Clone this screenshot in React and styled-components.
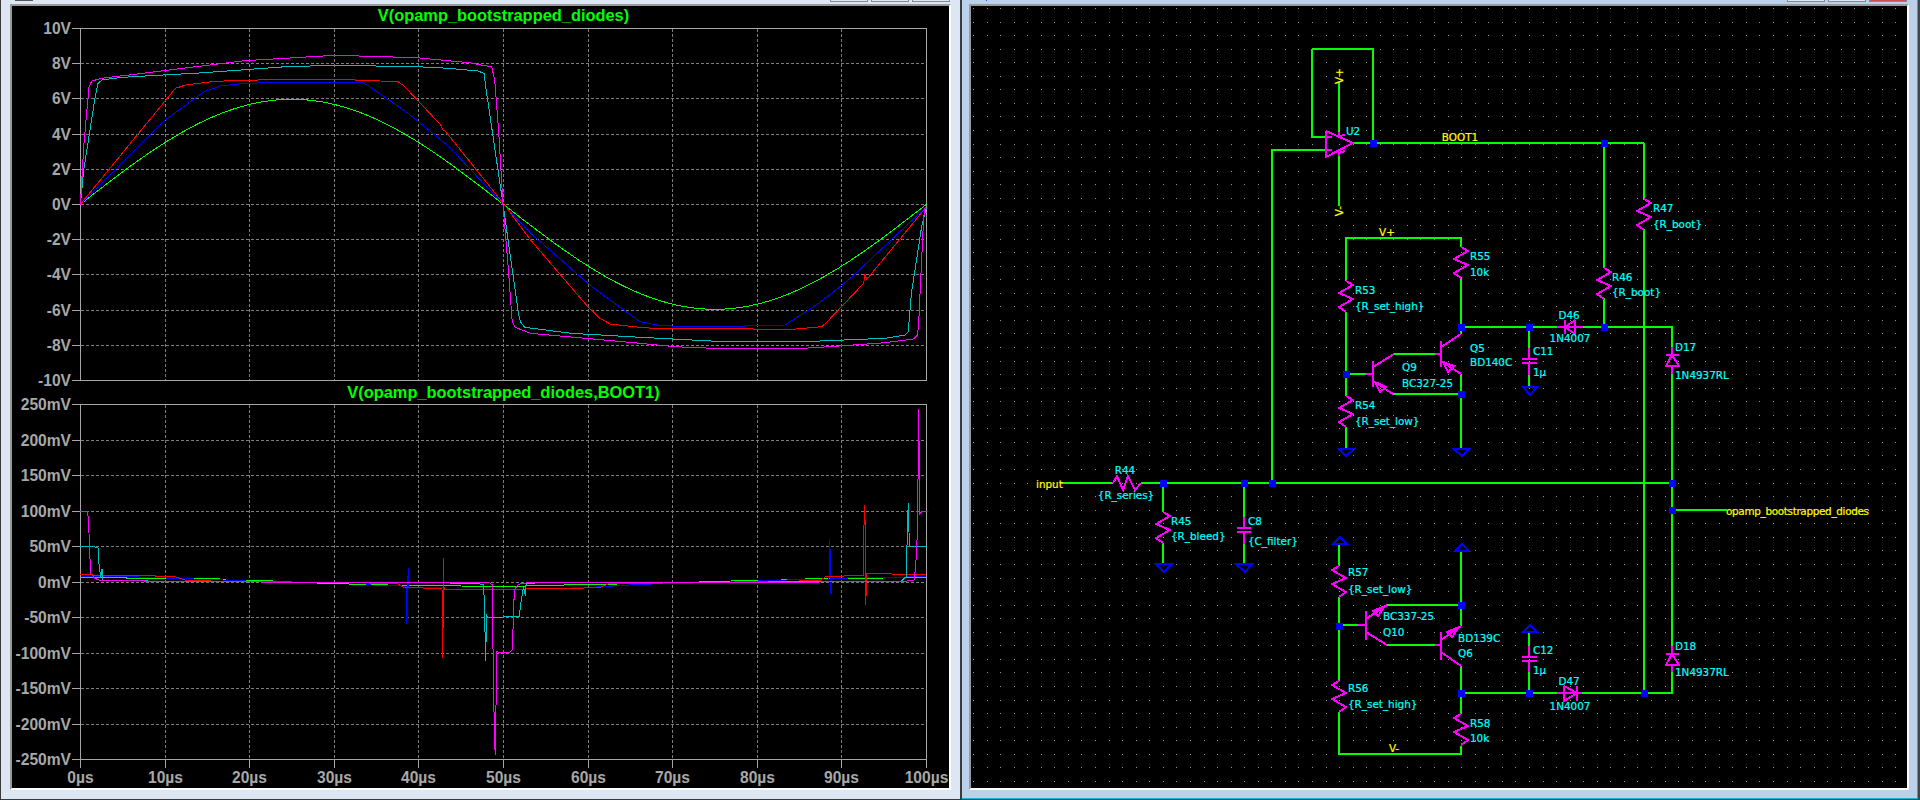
import React from 'react'
import styled, { createGlobalStyle } from 'styled-components'

const GlobalStyle = createGlobalStyle`
  html, body {
    margin: 0;
    padding: 0;
    background: #dce7f3;
    overflow: hidden;
  }
`

const Desktop = styled.div`
  display: flex;
  width: 1920px;
  height: 800px;
  overflow: hidden;
`

const Window = styled.section`
  box-sizing: border-box;
  position: relative;
  flex: none;
  width: ${({ $width }) => $width}px;
  height: 800px;
  padding: ${({ $pad }) => $pad};
  background: ${({ $tone }) => $tone};
  border-style: solid;
  border-color: ${({ $edge }) => $edge};
  border-width: ${({ $edges }) => $edges};
  box-shadow: ${({ $glow }) => ($glow ? `inset -1px -1px 0 ${$glow}` : 'none')};
`

const CaptionButtons = styled.div`
  position: absolute;
  top: 0;
  right: ${({ $right }) => $right}px;
  display: flex;
  gap: 3px;
`

const CaptionButton = styled.span`
  width: 38px;
  height: 2px;
  box-sizing: border-box;
  background: ${({ $close }) => ($close ? '#c75050' : '#dfe8f2')};
  border: 1px solid #7f8b99;
  border-top: none;
`

const CaptionText = styled.span`
  position: absolute;
  top: 0;
  left: ${({ $left }) => $left}px;
  width: ${({ $size }) => $size}px;
  height: 1px;
  background: ${({ $color }) => $color};
`

const Sunken = styled.div`
  box-sizing: border-box;
  height: ${({ $height }) => $height}px;
  background: #000;
  border-top: 2px solid #9a9a9a;
  border-left: 2px solid #9a9a9a;
  border-right: 2px solid #fff;
  border-bottom: 2px solid #fff;
`

const Pane = styled.div`
  display: flex;
  flex-direction: column;
`

const PaneTitle = styled.div`
  box-sizing: border-box;
  height: ${({ $height }) => $height}px;
  padding: 0 22px 0 68px;
  color: #00ff00;
  font: bold 16.4px/18px 'Liberation Sans', Arial, sans-serif;
  text-align: center;
  white-space: nowrap;
`

const Drawing = styled.svg`
  display: block;
  overflow: visible;
`

const AxisLine = styled.path`
  fill: none;
  stroke: #a6a6a6;
  stroke-width: 1;
  shape-rendering: crispEdges;
`

const GridLine = styled.path`
  fill: none;
  stroke: #7d7d7d;
  stroke-width: 1;
  stroke-dasharray: 3 2;
  shape-rendering: crispEdges;
`

const Trace = styled.polyline`
  fill: none;
  stroke: ${({ $color }) => $color};
  stroke-width: 1;
  shape-rendering: crispEdges;
`

const AxisLabel = styled.text`
  fill: #a8a8a8;
  font: bold 15.6px 'Liberation Sans', Arial, sans-serif;
  text-anchor: ${({ $anchor }) => $anchor};
`

const GridDots = styled.path`
  fill: #999;
  shape-rendering: crispEdges;
`

const Wire = styled.polyline`
  fill: none;
  stroke: #00ff00;
  stroke-width: 2;
  shape-rendering: crispEdges;
`

const Part = styled.polyline`
  fill: none;
  stroke: #ff00ff;
  stroke-width: 2;
  shape-rendering: crispEdges;
`

const Ground = styled.polygon`
  fill: none;
  stroke: #0000ff;
  stroke-width: 2;
  shape-rendering: crispEdges;
`

const Junction = styled.rect`
  fill: #0000ff;
  shape-rendering: crispEdges;
`

const NetLabel = styled.text`
  fill: ${({ $net }) => ($net ? '#ffff00' : '#00ffff')};
  stroke: ${({ $net }) => ($net ? '#ffff00' : '#00ffff')};
  stroke-width: 0.2;
  font: 10.4px 'DejaVu Sans', Verdana, sans-serif;
  text-anchor: ${({ $anchor }) => $anchor || 'start'};
`

const TRACE_COLORS = {
  green: '#00ff00',
  blue: '#0000ff',
  red: '#ff0000',
  cyan: '#00bfbf',
  magenta: '#ff00ff',
}

// samples read off the plot, x in 1/2.45 px and y in 1/3 px, right half continues after 1568
const R = 1568
const toPoints = (pairs, offsetY) =>
  pairs.map(([x, y]) => `${(x / 2.45).toFixed(1)},${(offsetY + y / 3).toFixed(1)}`).join(' ')

const sineSamples = () => {
  const out = []
  for (let t = 0; t <= 100; t += 0.5) {
    const x = 80.4 + 8.46 * t
    const y = 204.3 - 105 * Math.sin((2 * Math.PI * t) / 100)
    out.push(`${x.toFixed(1)},${y.toFixed(1)}`)
  }
  return out.join(' ')
}

const UPPER_TRACES = [
  { color: 'green', points: sineSamples() },
  {
    color: 'blue',
    points: toPoints(
      [
        [197, 613], [405, 360], [500, 275], [540, 258], [600, 250], [700, 247], [885, 247], [900, 255], [1000, 340],
        [1100, 440], [1233, 613], [1300, 700], [1450, 860], [1568, 965], [R + 50, 977], [R + 160, 981], [R + 355, 975],
        [R + 420, 925], [R + 465, 885], [R + 520, 830], [R + 702, 620],
      ],
      0
    ),
  },
  {
    color: 'red',
    points: toPoints(
      [
        [197, 613], [405, 302], [430, 265], [455, 255], [525, 244], [690, 238], [870, 240],
        [975, 245], [990, 258], [1080, 375], [1085, 390], [1090, 392], [1233, 610], [1300, 720], [1440, 920], [1470, 955],
        [1495, 972], [1568, 982], [R + 30, 985], [R + 375, 988], [R + 445, 980], [R + 455, 970], [R + 548, 850],
        [R + 551, 825], [R + 556, 838], [R + 702, 620],
      ],
      0
    ),
  },
  {
    color: 'cyan',
    points: toPoints(
      [
        [197, 613], [205, 510], [232, 300], [240, 250], [250, 240], [300, 232], [500, 218], [700, 200], [820, 196],
        [1020, 200], [1100, 205], [1170, 213], [1186, 220], [1190, 260], [1232, 610], [1270, 940], [1275, 965], [1285, 982],
        [1400, 1000], [1568, 1012], [R + 175, 1023], [R + 440, 1023], [R + 600, 1015], [R + 650, 1005], [R + 657, 995],
        [R + 665, 880], [R + 690, 680], [R + 702, 620],
      ],
      0
    ),
  },
  {
    color: 'magenta',
    points: toPoints(
      [
        [197, 615], [205, 440], [218, 260], [225, 243], [250, 235], [400, 212], [600, 182], [820, 166], [1020, 173],
        [1150, 188], [1205, 201], [1212, 240], [1222, 400], [1232, 610], [1245, 800], [1255, 965], [1262, 982], [1300, 1000],
        [1568, 1030], [R + 85, 1040], [R + 180, 1045], [R + 400, 1045], [R + 500, 1037], [R + 600, 1028], [R + 670, 1017],
        [R + 680, 1005], [R + 683, 960], [R + 695, 650], [R + 699, 620],
      ],
      0
    ),
  },
]

const LOWER_TRACES = [
  {
    color: 'green',
    points: [
      [197, 532], [310, 532], [310, 535], [530, 535], [553, 540], [640, 541], [720, 547], [800, 550], [880, 553], [980, 556],
      [1130, 558], [1235, 560], [1340, 556], [1480, 553], [R + 20, 550], [R + 105, 547], [R + 185, 545], [R + 262, 541],
      [R + 345, 540], [R + 445, 535], [R + 595, 534], [R + 702, 531],
    ],
  },
  {
    color: 'blue',
    points: [
      [197, 528], [340, 531], [450, 536], [530, 539], [640, 545], [880, 548], [910, 555], [985, 558], [995, 560], [997, 672],
      [1000, 505], [1002, 562], [1090, 564], [1400, 564], [1480, 560], [1568, 553], [R + 200, 547], [R + 360, 540],
      [R + 440, 537], [R + 463, 537], [R + 465, 418], [R + 468, 583], [R + 470, 535], [R + 600, 532], [R + 702, 530],
    ],
  },
  {
    color: 'red',
    points: [
      [197, 523], [225, 523], [230, 526], [380, 526], [382, 529], [430, 530], [445, 537], [460, 542], [640, 545], [880, 548],
      [975, 552], [988, 562], [1055, 565], [1083, 566], [1085, 775], [1086, 475], [1087, 560], [1090, 568], [1230, 568],
      [1415, 565], [1470, 562], [1490, 552], [R + 100, 548], [R + 185, 547], [R + 440, 542], [R + 455, 530], [R + 520, 527],
      [R + 547, 526], [R + 547, 422], [R + 551, 316], [R + 553, 614], [R + 556, 520], [R + 702, 525],
    ],
  },
  {
    color: 'cyan',
    points: [
      [197, 439], [225, 439], [240, 443], [243, 500], [247, 530], [250, 508], [250, 540], [275, 542], [640, 546], [880, 546],
      [1170, 550], [1185, 555], [1187, 630], [1190, 782], [1192, 645], [1195, 652], [1272, 650], [1277, 600], [1283, 560],
      [1287, 588], [1289, 552], [1310, 549], [1568, 548], [R + 640, 544], [R + 652, 530], [R + 657, 310], [R + 660, 438],
      [R + 702, 438],
    ],
  },
  {
    color: 'magenta',
    points: [
      [197, 334], [215, 335], [218, 400], [222, 520], [232, 535], [245, 541], [400, 544], [640, 546], [1100, 548], [1200, 549],
      [1207, 555], [1208, 800], [1212, 1040], [1214, 1065], [1216, 830], [1217, 755], [1225, 757], [1248, 758], [1255, 750],
      [1258, 650], [1260, 570], [1270, 553], [1290, 549], [1568, 548], [R + 640, 545], [R + 672, 540], [R + 678, 458],
      [R + 680, 345], [R + 683, 28], [R + 684, 210], [R + 684, 343], [R + 690, 335], [R + 702, 335],
    ],
  },
].map((trace) => ({ ...trace, points: toPoints(trace.points, 400) }))

const TIME_TICKS = [
  [80.5, '0µs'], [165.5, '10µs'], [249.5, '20µs'], [334.5, '30µs'], [418.5, '40µs'], [503.5, '50µs'],
  [588.5, '60µs'], [672.5, '70µs'], [757.5, '80µs'], [841.5, '90µs'], [926.5, '100µs'],
]

const UPPER_LEVELS = [
  [28.5, '10V'], [63.5, '8V'], [98.5, '6V'], [134.5, '4V'], [169.5, '2V'], [204.5, '0V'],
  [239.5, '-2V'], [274.5, '-4V'], [310.5, '-6V'], [345.5, '-8V'], [380.5, '-10V'],
]

const LOWER_LEVELS = [
  [404.5, '250mV'], [440.5, '200mV'], [475.5, '150mV'], [511.5, '100mV'], [546.5, '50mV'], [582.5, '0mV'],
  [617.5, '-50mV'], [653.5, '-100mV'], [688.5, '-150mV'], [724.5, '-200mV'], [759.5, '-250mV'],
]

const Plot = ({ viewBox, width, height, levels, traces, timeLabels }) => {
  const top = levels[0][0]
  const bottom = levels[levels.length - 1][0]
  const inner = levels.slice(1, -1)
  const columns = TIME_TICKS.slice(1, -1)
  return (
    <Drawing width={width} height={height} viewBox={viewBox}>
      <GridLine d={inner.map(([y]) => `M81 ${y}H924`).join('')} />
      <GridLine d={columns.map(([x]) => `M${x} ${top}V${bottom}`).join('')} />
      <AxisLine d={`M80.5 ${top}H926.5V${bottom}H80.5Z`} />
      <AxisLine d={levels.map(([y]) => `M72 ${y}H80`).join('')} />
      {levels.map(([y, text]) => (
        <AxisLabel key={text} x={71} y={y + 5.5} $anchor="end">
          {text}
        </AxisLabel>
      ))}
      {timeLabels && <AxisLine d={TIME_TICKS.map(([x]) => `M${x} ${bottom}V768`).join('')} />}
      {timeLabels &&
        TIME_TICKS.map(([x, text]) => (
          <AxisLabel key={text} x={x} y={783} $anchor="middle">
            {text}
          </AxisLabel>
        ))}
      {traces.map((trace) => (
        <Trace key={trace.color} $color={TRACE_COLORS[trace.color]} points={trace.points} />
      ))}
    </Drawing>
  )
}

const dotGrid = () => {
  let d = ''
  for (let row = 0; row < 58; row += 1) {
    const y = Math.round(9 + row * 13.56)
    for (let col = 0; col < 69; col += 1) {
      d += `M${Math.round(973 + col * 13.56)} ${y}h1v1h-1z`
    }
  }
  return d
}

const WIRES = [
  '1312,50 1373,50 1373,144',
  '1312,50 1312,138 1326,138',
  '1272,484 1272,151 1326,151',
  '1339,83 1339,133',
  '1339,157 1339,207',
  '1353,144 1644,144',
  '1604,144 1604,269',
  '1604,299 1604,328',
  '1644,144 1644,201',
  '1644,230 1644,694',
  '1346,282 1346,239 1461,239 1461,248',
  '1346,313 1346,397',
  '1346,428 1346,450',
  '1461,278 1461,335',
  '1461,375 1461,450',
  '1394,355 1435,355',
  '1350,375 1366,375',
  '1393,395 1461,395',
  '1461,328 1557,328',
  '1583,328 1672,328 1672,348',
  '1529,328 1529,349',
  '1529,376 1529,388',
  '1672,375 1672,647',
  '1672,673 1672,694 1582,694',
  '1060,484 1113,484',
  '1141,484 1672,484',
  '1676,511 1727,511',
  '1163,484 1163,513',
  '1163,544 1163,565',
  '1244,484 1244,518',
  '1244,545 1244,565',
  '1339,545 1339,567',
  '1339,598 1339,682',
  '1339,713 1339,755 1461,755 1461,747',
  '1461,715 1461,667',
  '1461,694 1557,694',
  '1461,627 1461,552',
  '1387,606 1461,606',
  '1341,626 1358,626',
  '1387,646 1435,646',
  '1529,633 1529,647',
  '1529,673 1529,694',
]

const vResistor = (x, y, flip = 1) =>
  [
    [x, y], [x + 7 * flip, y + 4], [x - 7 * flip, y + 12], [x + 7 * flip, y + 18], [x - 7 * flip, y + 26], [x, y + 31],
  ]
    .map((p) => p.join(','))
    .join(' ')

const PARTS = [
  // op amp
  '1326,132 1326,158 1353,144 1326,132',
  '1327,138 1332,138',
  '1327,151 1332,151',
  '1339,133 1339,137 1345,136',
  '1339,157 1339,154 1345,152',
  // resistors
  vResistor(1644, 200),
  vResistor(1604, 269),
  vResistor(1346, 282),
  vResistor(1461, 248),
  vResistor(1346, 397),
  vResistor(1339, 567, -1),
  vResistor(1339, 682, -1),
  vResistor(1461, 715, -1),
  vResistor(1163, 513),
  '1113,484 1117,477 1123,491 1128,477 1135,491 1141,484',
  // capacitors
  '1244,518 1244,528',
  '1237,529 1251,529',
  '1237,533 1251,533',
  '1244,533 1244,545',
  '1529,349 1529,359',
  '1522,360 1537,360',
  '1522,364 1537,364',
  '1529,364 1529,376',
  '1529,647 1529,657',
  '1522,658 1537,658',
  '1522,662 1537,662',
  '1529,662 1529,673',
  // diodes
  '1557,328 1583,328',
  '1565,321 1565,335',
  '1575,321 1575,335 1565,328 1575,321',
  '1672,348 1672,356',
  '1666,356 1679,356',
  '1672,356 1666,367 1679,367 1672,356',
  '1672,367 1672,375',
  '1672,647 1672,655',
  '1666,655 1679,655',
  '1672,655 1666,666 1679,666 1672,655',
  '1672,666 1672,673',
  '1557,694 1582,694',
  '1564,687 1564,702 1577,694 1564,687',
  '1577,687 1577,702',
  // transistors
  '1435,355 1441,355',
  '1441,342 1441,368',
  '1441,348 1461,335',
  '1441,362 1461,375',
  '1366,375 1373,375',
  '1373,362 1373,388',
  '1373,368 1394,355',
  '1373,382 1393,395',
  '1358,626 1366,626',
  '1366,612 1366,641',
  '1366,620 1387,606',
  '1366,633 1387,646',
  '1435,646 1441,646',
  '1441,633 1441,661',
  '1441,641 1461,627',
  '1441,653 1461,667',
  // emitter arrows
  '1443,363 1454,367 1448,373 1443,363',
  '1375,383 1386,388 1380,393 1375,383',
  '1459,628 1447,633 1452,638 1459,628',
  '1385,607 1373,612 1378,617 1385,607',
]

const GROUNDS = [
  '1339,450 1354,450 1346,457',
  '1454,450 1469,450 1462,457',
  '1523,388 1537,388 1530,396',
  '1156,565 1172,565 1164,573',
  '1236,565 1252,565 1245,573',
  '1333,545 1347,545 1340,538',
  '1455,552 1469,552 1462,545',
  '1523,633 1537,633 1530,626',
]

const JUNCTIONS = [
  [1373, 144], [1604, 144], [1461, 328], [1529, 328], [1604, 328], [1346, 375], [1461, 395],
  [1163, 484], [1244, 484], [1272, 484], [1672, 484], [1672, 511], [1339, 627], [1461, 606],
  [1461, 694], [1529, 694], [1644, 694],
]

const LABELS = [
  ['U2', 1346, 132],
  ['R47', 1653, 209],
  ['{R_boot}', 1653, 225],
  ['R46', 1612, 278],
  ['{R_boot}', 1612, 293],
  ['R55', 1470, 257],
  ['10k', 1470, 273],
  ['R53', 1355, 291],
  ['{R_set_high}', 1355, 307],
  ['R54', 1355, 406],
  ['{R_set_low}', 1355, 422],
  ['Q5', 1470, 349],
  ['BD140C', 1470, 363],
  ['Q9', 1402, 368],
  ['BC327-25', 1402, 384],
  ['C11', 1533, 352],
  ['1µ', 1533, 373],
  ['D46', 1569, 316, 'middle'],
  ['1N4007', 1570, 339, 'middle'],
  ['D17', 1675, 348],
  ['1N4937RL', 1675, 376],
  ['D18', 1675, 647],
  ['1N4937RL', 1675, 673],
  ['R44', 1125, 471, 'middle'],
  ['{R_series}', 1126, 496, 'middle'],
  ['R45', 1171, 522],
  ['{R_bleed}', 1171, 537],
  ['C8', 1248, 522],
  ['{C_filter}', 1248, 542],
  ['R57', 1348, 573],
  ['{R_set_low}', 1348, 590],
  ['R56', 1348, 689],
  ['{R_set_high}', 1348, 705],
  ['R58', 1470, 724],
  ['10k', 1470, 739],
  ['BC337-25', 1383, 617],
  ['Q10', 1383, 633],
  ['BD139C', 1458, 639],
  ['Q6', 1458, 654],
  ['C12', 1533, 651],
  ['1µ', 1533, 671],
  ['D47', 1569, 682, 'middle'],
  ['1N4007', 1570, 707, 'middle'],
]

const NETS = [
  ['BOOT1', 1460, 138, 'middle'],
  ['V+', 1387, 233, 'middle'],
  ['V-', 1394, 749, 'middle'],
  ['input', 1036, 485],
]

const Schematic = () => (
  <Drawing width={937} height={780} viewBox="971 7 937 780">
    <GridDots d={dotGrid()} />
    {WIRES.map((points) => (
      <Wire key={points} points={points} />
    ))}
    {PARTS.map((points, i) => (
      <Part key={i} points={points} />
    ))}
    {GROUNDS.map((points) => (
      <Ground key={points} points={points} />
    ))}
    {JUNCTIONS.map(([x, y]) => (
      <Junction key={`${x}-${y}`} x={x - 3} y={y - 3} width={7} height={7} />
    ))}
    {LABELS.map(([text, x, y, anchor]) => (
      <NetLabel key={`${text}${x}${y}`} x={x} y={y} dy="0.36em" $anchor={anchor}>
        {text}
      </NetLabel>
    ))}
    {NETS.map(([text, x, y, anchor]) => (
      <NetLabel key={text} $net x={x} y={y} dy="0.36em" $anchor={anchor}>
        {text}
      </NetLabel>
    ))}
    <NetLabel $net x={1726} y={512} dy="0.36em" textLength={143}>
      opamp_bootstrapped_diodes
    </NetLabel>
    <NetLabel $net x={1339} y={77} dy="0.36em" $anchor="middle" transform="rotate(-90 1339 77)">
      V+
    </NetLabel>
    <NetLabel $net x={1339} y={212} dy="0.36em" $anchor="middle" transform="rotate(-90 1339 212)">
      V-
    </NetLabel>
  </Drawing>
)

const App = () => (
  <>
    <GlobalStyle />
    <Desktop>
      <Window $width={962} $tone="#dce7f3" $edge="#3a3a3a" $edges="0 2px 1px 1px" $pad="4px 9px 0 9px">
        <CaptionText $left={14} $size={18} $color="#555" />
        <CaptionButtons $right={10}>
          <CaptionButton />
          <CaptionButton />
          <CaptionButton />
        </CaptionButtons>
        <Sunken $height={786}>
          <Pane>
            <PaneTitle $height={22}>V(opamp_bootstrapped_diodes)</PaneTitle>
            <Plot viewBox="12 28 937 355" width={937} height={355} levels={UPPER_LEVELS} traces={UPPER_TRACES} />
            <PaneTitle $height={21}>V(opamp_bootstrapped_diodes,BOOT1)</PaneTitle>
            <Plot viewBox="12 404 937 382" width={937} height={382} levels={LOWER_LEVELS} traces={LOWER_TRACES} timeLabels />
          </Pane>
        </Sunken>
      </Window>
      <Window $width={958} $tone="#b9d1ea" $edge="#444" $edges="0 2px 1px 0" $glow="#1fb3d0" $pad="4px 9px 0 7px">
        <CaptionText $left={24} $size={1} $color="#2a5bd0" />
        <CaptionButtons $right={11}>
          <CaptionButton />
          <CaptionButton />
          <CaptionButton $close />
        </CaptionButtons>
        <Sunken $height={786}>
          <Schematic />
        </Sunken>
      </Window>
    </Desktop>
  </>
)

export default App
